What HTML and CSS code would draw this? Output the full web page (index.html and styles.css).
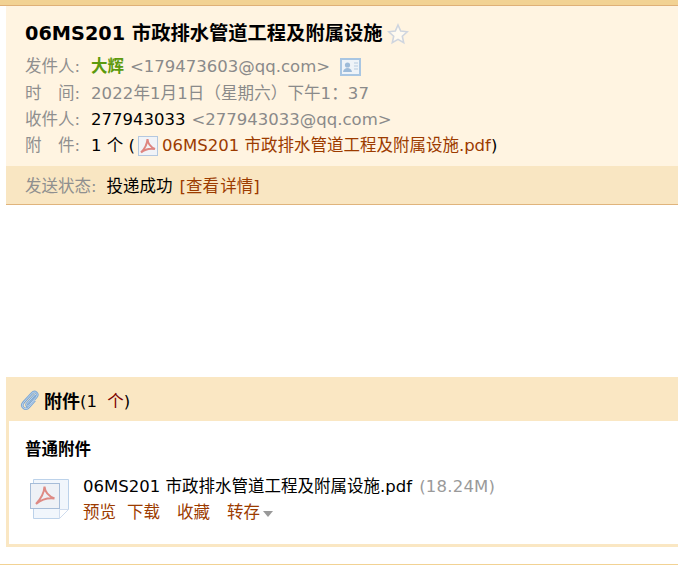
FILE: index.html
```html
<!DOCTYPE html>
<html>
    <head>
        <meta charset="UTF-8">
        <title>06MS201 市政排水管道工程及附属设施</title>
        <link rel="stylesheet" href="styles.css">
    </head>

    <body>
        <div class="top-bar"></div>

        <div class="mail-head">
            <div class="head-info">
                <h1 class="subject">06MS201 市政排水管道工程及附属设施
                    <svg class="star" width="22" height="22" viewBox="0 0 22 22">
                        <path d="M11 2l2.700 6.100 6.600.7-5 4.400 1.400 6.500L11 16.400l-5.700 3.300 1.400-6.500-5-4.400 6.600-.7z" fill="#fffaf0" stroke="#cfd5df" stroke-width="1.600"/>
                    </svg>
                </h1>
                <div class="info-row">
                    <span class="label">发件人:</span>
                    <b class="sender">大辉</b>
                    <span class="grey">&lt;179473603@qq.com&gt;</span>
                    <svg class="card" width="21" height="18" viewBox="0 0 21 18">
                        <rect x="1" y="1" width="19" height="16" fill="#eef3f8" stroke="#a9c6e2" stroke-width="2"/>
                        <circle cx="7.500" cy="7" r="2.600" fill="#9dbbd9"/>
                        <path d="M3 14c.5-3 2.500-4 4.500-4s4 1 4.500 4z" fill="#9dbbd9"/>
                        <path d="M14 5h4M14 8h4M14 11h4" stroke="#b6cbe0"/>
                    </svg>
                </div>
                <div class="info-row">
                    <span class="label">时　间:</span>
                    <span class="grey date">2022年1月1日（星期六）下午1：37</span>
                </div>
                <div class="info-row">
                    <span class="label">收件人:</span>
                    <span>277943033</span>
                    <span class="grey">&lt;277943033@qq.com&gt;</span>
                </div>
                <div class="info-row">
                    <span class="label">附　件:</span>
                    <span>1 个 (</span>
                    <svg class="pdf-small" width="20" height="20" viewBox="0 0 20 20">
                        <rect x="0.500" y="0.500" width="19" height="19" fill="#f1f3f7" stroke="#b4c8e0"/>
                        <path d="M9.500 3c-.3 4.500-2.500 9.500-6.500 13.500M9.500 3c.3 4.500 3 8 7.500 10M3 16.500c3.500-3 8.500-4.500 14-3.500" fill="none" stroke="#de8580" stroke-width="2"/>
                    </svg>
                    <span class="file-ref"><a class="link">06MS201 市政排水管道工程及附属设施.pdf</a>)</span>
                </div>
            </div>
            <div class="status-row">
                <span class="status-label">发送状态:</span>
                <span>投递成功</span>
                <a class="link details">[查看 详情]</a>
            </div>
        </div>

        <div class="mail-body"></div>

        <div class="attach-box">
            <div class="attach-title">
                <svg class="clip" width="20" height="22" viewBox="0 0 20 22">
                    <path d="M15 5.500L7 14.500c-1.500 1.700.6 3.400 2 1.900l7.200-8.200c3-3.400-1.300-7.200-4.300-3.900L3.500 13.500c-3.500 4 1.800 8.700 5.300 4.700l6.200-7" fill="none" stroke="#7ba6d3" stroke-width="2.600"/>
                    <path d="M15 5.500L7 14.500c-1.500 1.700.6 3.400 2 1.900l7.200-8.200c3-3.400-1.300-7.200-4.300-3.900L3.500 13.500c-3.500 4 1.800 8.700 5.300 4.700l6.200-7" fill="none" stroke="#cfe1f3" stroke-width="0.800"/>
                </svg>
                <b>附件</b><span class="count">(1 <span class="red">个</span>)</span>
            </div>
            <div class="attach-content">
                <h2 class="attach-type">普通附件</h2>
                <div class="attach-item">
                    <svg class="pdf-big" width="40" height="42" viewBox="0 0 40 42">
                        <path d="M3.500 1.500h35v30l-9 9h-26z" fill="#f1f6fc" stroke="#bcd2ea"/>
                        <path d="M38.500 31.500h-9v9z" fill="#fff" stroke="#cfdcee"/>
                        <rect x="0.500" y="5.500" width="29" height="25" fill="#eef1f6" stroke="#a6bcd8"/>
                        <path d="M14.500 8.500c-.3 6-3 11.500-8.500 17.500M14.500 8.500c.5 6 4 9.500 10 12M6 26c5-4 11-6.500 18.500-5.500" fill="none" stroke="#de8a84" stroke-width="2"/>
                    </svg>
                    <div class="attach-text">
                        <div class="file-line">06MS201 市政排水管道工程及附属设施.pdf <span class="size">(18.24M)</span></div>
                        <div class="actions">
                            <a class="link">预览</a>
                            <a class="link">下载</a>
                            <a class="link">收藏</a>
                            <a class="link">转存<i class="arrow"></i></a>
                        </div>
                    </div>
                </div>
            </div>
        </div>

        <div class="bottom-bar"></div>
    </body>
</html>
```

FILE: styles.css
```css
html, body {
    height: 565px;
    overflow: hidden;
}

body {
    margin: 0;
    padding-left: 6px;
    background-color: white;
    color: black;
    font-family: "DejaVu Sans", "Noto Sans CJK SC", sans-serif;
    font-size: 16.5px;
}

.top-bar {
    height: 5px;
    margin-left: -6px;
    background-color: #f2d293;
    border-bottom: 1px solid #dfb077;
}

.mail-head {
    background-color: #fff4e1;
    border-bottom: 1px solid #e0b47c;
}

.head-info {
    padding: 14px 0 7px 19px;
    height: 139px;
}

.subject {
    display: flex;
    align-items: center;
    gap: 4px;
    margin: 0 0 6px 0;
    font-size: 19.3px;
    line-height: 28px;
    font-weight: bold;
}

.info-row {
    display: flex;
    align-items: center;
    gap: 6px;
    height: 26.4px;
    line-height: 26px;
    white-space: nowrap;
}

.label {
    color: #8f8f8f;
    width: 60px;
}

.grey {
    color: #8a8a8a;
}

.date {
    letter-spacing: 0.1px;
}

.sender {
    color: #5c9a0c;
}

.card {
    margin-left: 4px;
}

.pdf-small {
    margin-left: -3px;
    margin-right: -2px;
}

.link {
    color: #9c3b00;
}

.details {
    word-spacing: -4px;
}

.red {
    color: #7a0000;
}

.status-row {
    display: flex;
    align-items: center;
    gap: 7px;
    height: 38px;
    padding-left: 19px;
    padding-bottom: 1px;
    box-sizing: border-box;
    background-color: #f9e6c2;
    white-space: nowrap;
}

.status-label {
    color: #8f8f8f;
    margin-right: 3px;
}

.mail-body {
    height: 172px;
}

.attach-box {
    border: solid #fae7c3;
    border-width: 0 0 3px 3px;
}

.attach-title {
    display: flex;
    align-items: center;
    height: 44px;
    margin-left: -3px;
    padding-left: 14px;
    padding-top: 1px;
    box-sizing: border-box;
    background-color: #fae7c3;
}

.attach-title b {
    margin-left: 4px;
    font-size: 18px;
}

.count {
    word-spacing: 5px;
}

.attach-content {
    height: 123px;
    padding: 18px 0 0 16px;
    box-sizing: border-box;
}

.attach-type {
    margin: 0;
    font-size: 16.5px;
    line-height: 22px;
}

.attach-item {
    display: flex;
    gap: 13px;
    margin: 14px 0 0 5px;
}

.pdf-big {
    margin-top: 3px;
}

.file-line {
    line-height: 24px;
    white-space: nowrap;
}

.size {
    margin-left: 2px;
    letter-spacing: 0.2px;
    color: #9a9a9a;
}

.actions {
    display: flex;
    gap: 11px;
    line-height: 27px;
}

.actions a + a + a {
    margin-left: 6px;
}

.arrow {
    display: inline-block;
    margin-left: 3px;
    border: 5px solid transparent;
    border-top: 6px solid #999;
    border-bottom: 0;
    vertical-align: middle;
}

.bottom-bar {
    height: 3px;
    margin-top: 17px;
    margin-left: -6px;
    background-color: #f2d293;
}
```
